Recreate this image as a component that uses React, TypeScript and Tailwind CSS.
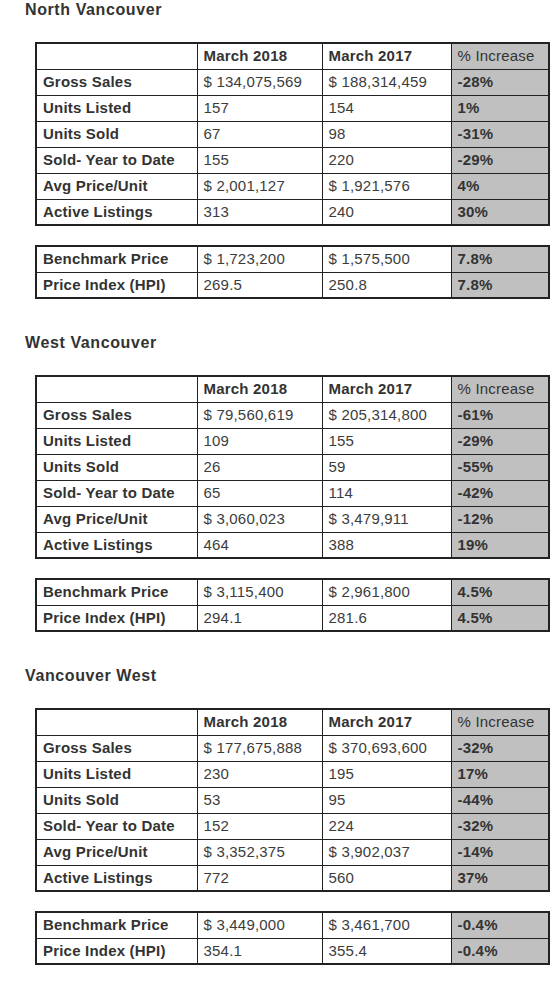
type Row = [string, string, string, string];

type Section = {
  title: string;
  stats: Row[];
  bench: Row[];
};

const sections: Section[] = [
  {
    title: "North Vancouver",
    stats: [
      ["Gross Sales", "$ 134,075,569", "$ 188,314,459", "-28%"],
      ["Units Listed", "157", "154", "1%"],
      ["Units Sold", "67", "98", "-31%"],
      ["Sold- Year to Date", "155", "220", "-29%"],
      ["Avg Price/Unit", "$ 2,001,127", "$ 1,921,576", "4%"],
      ["Active Listings", "313", "240", "30%"],
    ],
    bench: [
      ["Benchmark Price", "$ 1,723,200", "$ 1,575,500", "7.8%"],
      ["Price Index (HPI)", "269.5", "250.8", "7.8%"],
    ],
  },
  {
    title: "West Vancouver",
    stats: [
      ["Gross Sales", "$ 79,560,619", "$ 205,314,800", "-61%"],
      ["Units Listed", "109", "155", "-29%"],
      ["Units Sold", "26", "59", "-55%"],
      ["Sold- Year to Date", "65", "114", "-42%"],
      ["Avg Price/Unit", "$ 3,060,023", "$ 3,479,911", "-12%"],
      ["Active Listings", "464", "388", "19%"],
    ],
    bench: [
      ["Benchmark Price", "$ 3,115,400", "$ 2,961,800", "4.5%"],
      ["Price Index (HPI)", "294.1", "281.6", "4.5%"],
    ],
  },
  {
    title: "Vancouver West",
    stats: [
      ["Gross Sales", "$ 177,675,888", "$ 370,693,600", "-32%"],
      ["Units Listed", "230", "195", "17%"],
      ["Units Sold", "53", "95", "-44%"],
      ["Sold- Year to Date", "152", "224", "-32%"],
      ["Avg Price/Unit", "$ 3,352,375", "$ 3,902,037", "-14%"],
      ["Active Listings", "772", "560", "37%"],
    ],
    bench: [
      ["Benchmark Price", "$ 3,449,000", "$ 3,461,700", "-0.4%"],
      ["Price Index (HPI)", "354.1", "355.4", "-0.4%"],
    ],
  },
];

const cell = "h-[26px] border border-[#222] pl-[6px] pr-0 py-0 text-left align-middle whitespace-nowrap overflow-hidden";

const StatTable = ({ rows, header }: { rows: Row[]; header?: boolean }) => (
  <table className="table-fixed border-collapse border-2 border-[#222] w-[513px] text-[15px] leading-[16px] tracking-[0.2px] text-[#333]">
    <colgroup>
      <col className="w-[161px]" />
      <col className="w-[125px]" />
      <col className="w-[129px]" />
      <col className="w-[98px]" />
    </colgroup>
    <tbody>
      {header ? (
        <tr>
          <td className={cell}></td>
          <td className={`${cell} font-bold`}>March 2018</td>
          <td className={`${cell} font-bold`}>March 2017</td>
          <td className={`${cell} bg-[#c0c0c0]`}>% Increase</td>
        </tr>
      ) : null}
      {rows.map((r) => (
        <tr key={r[0]}>
          <td className={`${cell} font-bold`}>{r[0]}</td>
          <td className={`${cell} text-[#3c3c3c]`}>{r[1]}</td>
          <td className={`${cell} text-[#3c3c3c]`}>{r[2]}</td>
          <td className={`${cell} bg-[#c0c0c0] font-bold`}>{r[3]}</td>
        </tr>
      ))}
    </tbody>
  </table>
);

export default function App() {
  return (
    <div className="w-[559px] min-h-[986px] bg-white font-['Liberation_Sans',Arial,sans-serif] text-[#333]">
      {sections.map((s) => (
        <div key={s.title} className="flex flex-col pb-[34px]">
          <h2 className="pl-[25px] text-[16px] leading-[20px] tracking-[0.6px] font-bold text-[#333]">{s.title}</h2>
          <div className="mt-[22px] pl-[35px]">
            <StatTable rows={s.stats} header />
          </div>
          <div className="mt-[19px] pl-[35px]">
            <StatTable rows={s.bench} />
          </div>
        </div>
      ))}
    </div>
  );
}
